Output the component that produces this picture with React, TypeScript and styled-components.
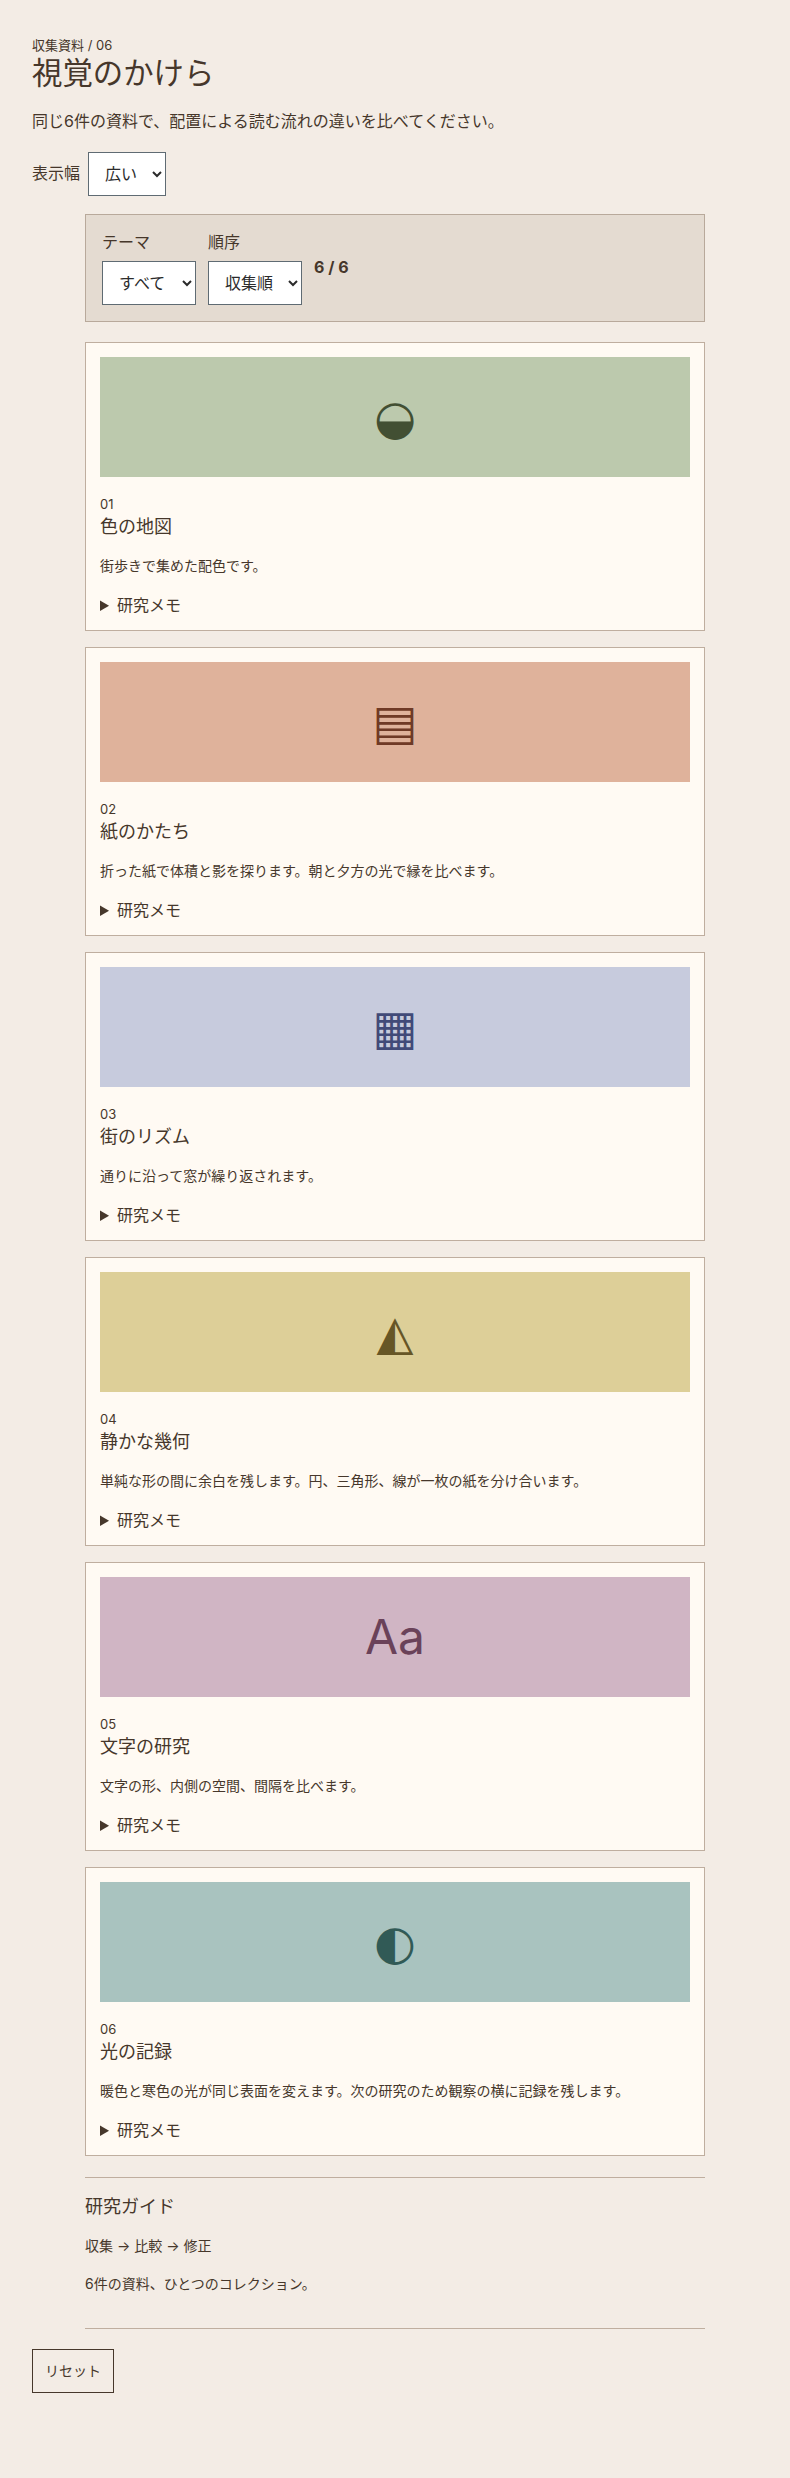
import * as React from 'react';
import styled, { createGlobalStyle } from 'styled-components';

const items = [
  { no: '01', title: '色の地図', text: '街歩きで集めた配色です。', glyph: '◒', bg: '#bcc9ad', fg: '#424f33' },
  { no: '02', title: '紙のかたち', text: '折った紙で体積と影を探ります。朝と夕方の光で縁を比べます。', glyph: '▤', bg: '#dfb29b', fg: '#6f3a26' },
  { no: '03', title: '街のリズム', text: '通りに沿って窓が繰り返されます。', glyph: '▦', bg: '#c7cbdd', fg: '#414a78' },
  { no: '04', title: '静かな幾何', text: '単純な形の間に余白を残します。円、三角形、線が一枚の紙を分け合います。', glyph: '◭', bg: '#ddcf98', fg: '#665626' },
  { no: '05', title: '文字の研究', text: '文字の形、内側の空間、間隔を比べます。', glyph: 'Aa', bg: '#d0b5c4', fg: '#6a4259', latin: true },
  { no: '06', title: '光の記録', text: '暖色と寒色の光が同じ表面を変えます。次の研究のため観察の横に記録を残します。', glyph: '◐', bg: '#a9c3bf', fg: '#315a56' },
];

export default function App() {
  return (
    <Page>
      <GlobalStyle />
      <Eyebrow>収集資料 / 06</Eyebrow>
      <Title>視覚のかけら</Title>
      <Lead>同じ6件の資料で、配置による読む流れの違いを比べてください。</Lead>
      <WidthRow>
        <span>表示幅</span>
        <Select defaultValue="wide">
          <option value="wide">広い</option>
          <option value="narrow">狭い</option>
        </Select>
      </WidthRow>
      <Column>
        <Filters>
          <Field>
            <span>テーマ</span>
            <Select defaultValue="all">
              <option value="all">すべて</option>
            </Select>
          </Field>
          <Field>
            <span>順序</span>
            <Select defaultValue="order">
              <option value="order">収集順</option>
            </Select>
          </Field>
          <Count>6 / 6</Count>
        </Filters>
        <Cards>
          {items.map((item) => (
            <Card key={item.no}>
              <Plate $bg={item.bg} $fg={item.fg} $latin={!!item.latin}>{item.glyph}</Plate>
              <Num>{item.no}</Num>
              <CardTitle>{item.title}</CardTitle>
              <CardText>{item.text}</CardText>
              <Memo>
                <summary>研究メモ</summary>
              </Memo>
            </Card>
          ))}
        </Cards>
        <Guide>
          <GuideTitle>研究ガイド</GuideTitle>
          <GuideText>収集 → 比較 → 修正</GuideText>
          <GuideText>6件の資料、ひとつのコレクション。</GuideText>
        </Guide>
      </Column>
      <Reset type="button">リセット</Reset>
    </Page>
  );
}

const GlobalStyle = createGlobalStyle`
  body {
    margin: 0;
    background: #f3ece5;
    color: #46372b;
    font-family: Inter, "Noto Sans CJK JP", "DejaVu Sans", sans-serif;
    font-size: 16px;
    line-height: 1.6;
  }
`;

const Page = styled.main`
  box-sizing: border-box;
  min-height: 2478px;
  padding: 36px 32px 32px;
`;

const Eyebrow = styled.p`
  margin: 0;
  font-size: 13px;
  line-height: 18px;
`;

const Title = styled.h1`
  margin: 0;
  font-size: 30.4px;
  font-weight: 400;
  line-height: 38px;
`;

const Lead = styled.p`
  margin: 16px 0 0;
  line-height: 26px;
`;

const WidthRow = styled.div`
  display: flex;
  align-items: center;
  gap: 8px;
  margin-top: 18px;
`;

const Select = styled.select`
  min-height: 44px;
  padding: 0 11px 0 12px;
  border: 1px solid #5f6b73;
  border-radius: 0;
  background: #fff;
  color: #2b2b2b;
  font: inherit;
`;

const Column = styled.div`
  max-width: 620px;
  margin: 18px auto 0;
`;

const Filters = styled.section`
  display: flex;
  align-items: center;
  gap: 12px;
  padding: 16px;
  border: 1px solid #b8a99b;
  background: #e4dbd1;
`;

const Field = styled.label`
  display: flex;
  flex-direction: column;
  align-items: flex-start;
  gap: 8px;
  line-height: 22px;
`;

const Count = styled.output`
  font-weight: 700;
`;

const Cards = styled.div`
  display: flex;
  flex-direction: column;
  gap: 16px;
  margin-top: 20px;
`;

const Card = styled.article`
  padding: 14px 14px 12px;
  border: 1px solid #bfae9f;
  background: #fffaf3;
`;

const Plate = styled.div<{ $bg: string; $fg: string; $latin: boolean }>`
  display: flex;
  align-items: center;
  justify-content: center;
  height: 120px;
  background: ${(p) => p.$bg};
  color: ${(p) => p.$fg};
  font-family: ${(p) => (p.$latin ? 'Inter' : '"DejaVu Sans"')}, sans-serif;
  font-size: 48px;
  line-height: 1;
`;

const Num = styled.div`
  margin-top: 18px;
  font-size: 13px;
  line-height: 19px;
`;

const CardTitle = styled.h2`
  margin: 0;
  font-size: 18px;
  font-weight: 400;
  line-height: 25px;
`;

const CardText = styled.p`
  margin: 16px 0 0;
  font-size: 14px;
  line-height: 22px;
`;

const Memo = styled.details`
  margin-top: 15px;
  line-height: 26px;
`;

const Guide = styled.section`
  margin-top: 21px;
  padding: 16px 0 33px;
  border-top: 1px solid #bfae9f;
  border-bottom: 1px solid #bfae9f;
`;

const GuideTitle = styled.h2`
  margin: 0;
  font-size: 18px;
  font-weight: 400;
  line-height: 25px;
`;

const GuideText = styled.p`
  margin: 16px 0 0;
  font-size: 14px;
  line-height: 22px;
`;

const Reset = styled.button`
  display: block;
  min-height: 44px;
  margin-top: 20px;
  padding: 0 12px;
  border: 1px solid #46372b;
  border-radius: 0;
  background: transparent;
  color: #46372b;
  font: inherit;
  font-size: 14px;
`;
